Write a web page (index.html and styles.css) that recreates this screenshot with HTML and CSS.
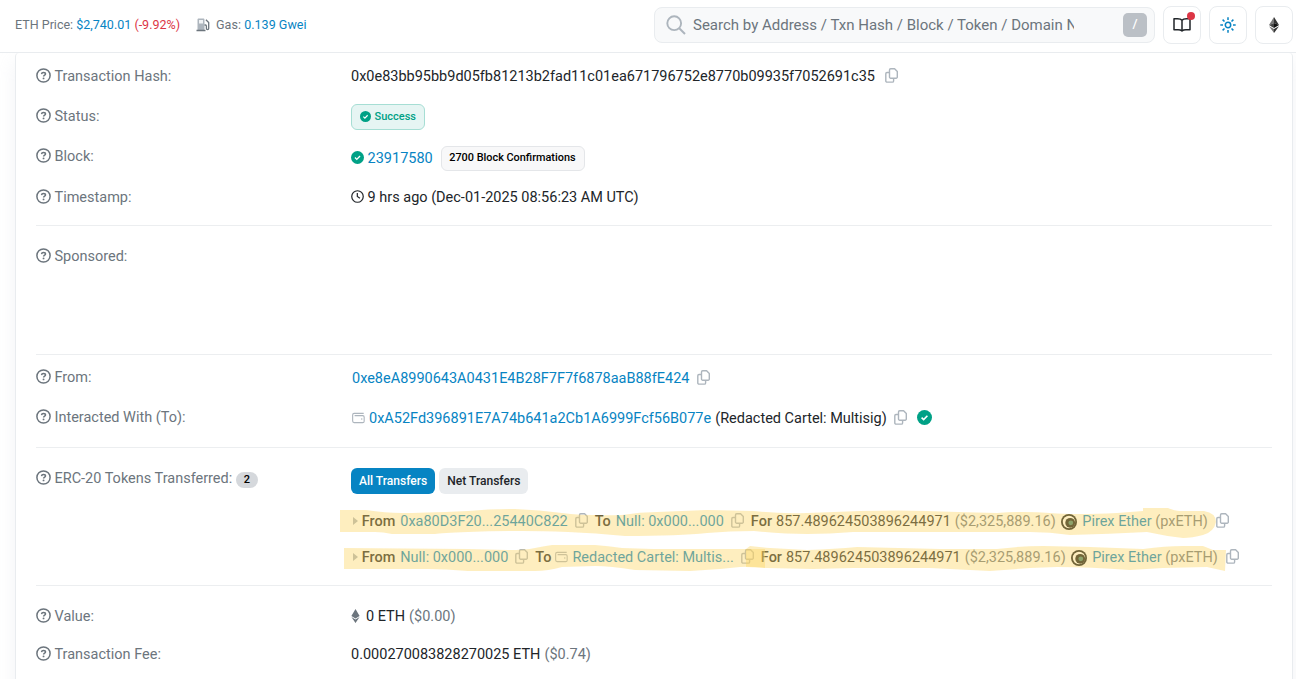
FILE: index.html
```html
<!DOCTYPE html>
<html lang="en">
<head>
<meta charset="utf-8">
<title>Transaction Details</title>
<link rel="stylesheet" href="styles.css">
</head>
<body>
<svg class="defs" aria-hidden="true">
  <symbol id="help" viewBox="0 0 15 15"><circle cx="7.500" cy="7.500" r="6.600" fill="none" stroke="currentColor" stroke-width="1.500"/><path d="M5.500 6.100c.1-1.100.8-1.700 2-1.700 1.100 0 2 .5 2 1.500 0 1.200-1.900 1.200-1.900 2.500" fill="none" stroke="currentColor" stroke-width="1.500"/><circle cx="7.550" cy="10.400" r=".95" fill="currentColor"/></symbol>
  <symbol id="copy" viewBox="0 0 13 15"><path d="M5.700.8h3.900l2.700 2.600v5.600a1.200 1.200 0 0 1-1.200 1.200H5.700a1.200 1.200 0 0 1-1.200-1.200V2A1.200 1.200 0 0 1 5.700.8zM4.500 4.500H2A1.200 1.200 0 0 0 .8 5.700v7.200A1.200 1.200 0 0 0 2 14.100h5.400a1.200 1.200 0 0 0 1.200-1.200v-2.600" fill="none" stroke="currentColor" stroke-width="1.400" stroke-linejoin="round"/></symbol>
  <symbol id="check" viewBox="0 0 16 16"><circle cx="8" cy="8" r="8" fill="#00a186"/><path d="M4.900 8.100l2.200 2.200 4-4.100" fill="none" stroke="#fff" stroke-width="1.700"/></symbol>
  <symbol id="wallet" viewBox="0 0 14 12"><path d="M12.600 1H2.300A1.700 1.700 0 0 0 .7 2.700v6.600A1.700 1.700 0 0 0 2.300 11h9.200a1.600 1.600 0 0 0 1.600-1.600V5a1.600 1.600 0 0 0-1.600-1.600H2.800" fill="none" stroke="currentColor" stroke-width="1.200"/><circle cx="10.500" cy="7.200" r=".8" fill="currentColor"/></symbol>
  <symbol id="token" viewBox="0 0 16 16"><circle cx="8" cy="8" r="8" fill="#10161a"/><circle cx="8" cy="8" r="6.200" fill="#fff"/><circle cx="9.200" cy="8.800" r="4.900" fill="#12181a"/><circle cx="9.800" cy="8.800" r="2.400" fill="#3f8070"/></symbol>
</svg>

<header class="topbar">
  <div class="stats">
    <span>ETH Price: <a>$2,740.01</a> <span class="down">(-9.92%)</span></span>
    <svg class="gas" viewBox="0 0 14 14"><path d="M1.500 12V1.800C1.500 1 2 .5 2.800.5h4.400c.8 0 1.300.5 1.300 1.300V12z" fill="#adb5bd"/><path d="M3 2h4v3.500H3z" fill="#f1f3f5"/><path d="M.5 12.500h9M8.500 7h1c.7 0 .9.500.9 1.200v2.200c0 1.500 2.300 1.500 2.300 0V4.600L9.900 1.800" fill="none" stroke="#6c757d" stroke-width="1.300"/></svg>
    <span class="gasprice">Gas: <a>0.139 Gwei</a></span>
  </div>
  <div class="tools">
    <div class="search">
      <svg viewBox="0 0 20 20"><circle cx="8.200" cy="8.200" r="6.900" fill="none" stroke="#adb5bd" stroke-width="1.900"/><path d="M13 13l6 6" stroke="#adb5bd" stroke-width="2"/></svg>
      <div class="placeholder">Search by Address / Txn Hash / Block / Token / Domain Name</div>
      <kbd>/</kbd>
    </div>
    <div class="tool"><svg class="book" viewBox="0 0 18 14"><path d="M9 2.300C8 1 6.500.8 4.500.8H1v11h4c2 0 3 .3 4 1.200 1-.9 2-1.200 4-1.200h4V.8h-3.500C11.500.8 10 1 9 2.300zV13" fill="none" stroke="#212529" stroke-width="1.500" stroke-linejoin="round"/></svg><i class="dot"></i></div>
    <div class="tool"><svg class="sun" viewBox="0 0 16 16"><g fill="none" stroke="#0784c3" stroke-width="1.500"><circle cx="8" cy="8" r="2.700"/><path d="M8 .3v2.700M8 13v2.700M.3 8H3M13 8h2.700M2.600 2.600l1.900 1.900M11.500 11.500l1.900 1.900M13.400 2.600l-1.900 1.900M4.500 11.500l-1.900 1.900"/></g></svg></div>
    <div class="tool"><svg class="eth" viewBox="0 0 10 16"><path d="M5 0L0 8.100 5 6z" fill="#777"/><path d="M5 0v6l5 2.100z" fill="#343434"/><path d="M0 8.100L5 6v5z" fill="#444"/><path d="M10 8.100L5 6v5z" fill="#111"/><path d="M0 9.200L5 16v-3.900z" fill="#777"/><path d="M10 9.200L5 16v-3.900z" fill="#343434"/></svg></div>
  </div>
</header>

<main class="card">
  <section class="group g1">
    <div class="row"><div class="label"><svg class="help"><use href="#help"/></svg>Transaction Hash:</div>
      <div class="value"><span class="txhash">0x0e83bb95bb9d05fb81213b2fad11c01ea671796752e8770b09935f7052691c35</span><svg class="copy c10"><use href="#copy"/></svg></div></div>
    <div class="row"><div class="label"><svg class="help"><use href="#help"/></svg>Status:</div>
      <div class="value"><span class="status"><svg viewBox="0 0 16 16"><use href="#check"/></svg>Success</span></div></div>
    <div class="row tall"><div class="label"><svg class="help"><use href="#help"/></svg>Block:</div>
      <div class="value low"><svg class="check"><use href="#check"/></svg><a>23917580</a><span class="confirm">2700 Block Confirmations</span></div></div>
    <div class="row"><div class="label"><svg class="help"><use href="#help"/></svg>Timestamp:</div>
      <div class="value"><svg class="clock" viewBox="0 0 14 14"><circle cx="7" cy="7" r="6.200" fill="none" stroke="currentColor" stroke-width="1.300"/><path d="M6.800 3.200V7l2.800 2" fill="none" stroke="currentColor" stroke-width="1.300"/></svg>9 hrs ago (Dec-01-2025 08:56:23 AM UTC)</div></div>
  </section>
  <section class="group g2">
    <div class="row"><div class="label"><svg class="help"><use href="#help"/></svg>Sponsored:</div></div>
  </section>
  <section class="group g3">
    <div class="row"><div class="label"><svg class="help"><use href="#help"/></svg>From:</div>
      <div class="value from"><a>0xe8eA8990643A0431E4B28F7F7f6878aaB88fE424</a><svg class="copy c8"><use href="#copy"/></svg></div></div>
    <div class="row"><div class="label"><svg class="help"><use href="#help"/></svg>Interacted With (To):</div>
      <div class="value from"><svg class="wallet"><use href="#wallet"/></svg><a>0xA52Fd396891E7A74b641a2Cb1A6999Fcf56B077e</a><span class="sp">(Redacted Cartel: Multisig)</span><svg class="copy c7"><use href="#copy"/></svg><svg class="check big"><use href="#check"/></svg></div></div>
  </section>
  <section class="group g4">
    <div class="row"><div class="label"><svg class="help"><use href="#help"/></svg>ERC-20 Tokens Transferred:<b class="count">2</b></div>
      <div class="value tabs"><span class="tab on">All Transfers</span><span class="tab">Net Transfers</span></div></div>
    <div class="transfers">
      <div class="transfer"><i class="caret"></i><b>From</b><a>0xa80D3F20...25440C822</a><svg class="copy c7"><use href="#copy"/></svg><b class="to">To</b><a>Null: 0x000...000</a><svg class="copy c7"><use href="#copy"/></svg><b class="for">For</b><span class="sp">857.489624503896244971</span><span class="muted sp">($2,325,889.16)</span><svg class="token"><use href="#token"/></svg><a>Pirex Ether <span class="muted">(pxETH)</span></a><svg class="copy c8"><use href="#copy"/></svg></div>
      <div class="transfer"><i class="caret"></i><b>From</b><a>Null: 0x000...000</a><svg class="copy c7"><use href="#copy"/></svg><b class="to">To</b><svg class="wallet w2"><use href="#wallet"/></svg><a class="nosp">Redacted Cartel: Multis...</a><svg class="copy c7"><use href="#copy"/></svg><b class="for">For</b><span class="sp">857.489624503896244971</span><span class="muted sp">($2,325,889.16)</span><svg class="token"><use href="#token"/></svg><a>Pirex Ether <span class="muted">(pxETH)</span></a><svg class="copy c8"><use href="#copy"/></svg></div>
      <svg class="marker" viewBox="336 503 900 72">
        <path d="M340 510H366Q385 513 402 513T468 511Q490 509 515 509Q540 510 562 513T622 515Q640 512 657 512L707 510L754 511V531Q730 531 707 533Q680 536 625 536Q595 533 568 532T522 531Q495 531 468 532T435 534H392Q383 532 375 532H340z"/>
        <path d="M754 511Q780 514 807 513T860 511Q900 510 927 511T997 513Q1025 511 1050 513T1117 513L1143 511V508H1168Q1175 511 1180 511H1204Q1216 513 1216 522Q1214 532 1203 535T1183 538Q1165 536 1147 532Q1110 534 1070 535Q1050 532 1030 532H853Q830 534 807 534T754 531z"/>
        <path d="M344 548L468 549L508 550Q525 550 535 548T552 545H595Q608 546 622 548L653 549L723 549H765V568Q750 566 740 567T720 569L690 571L635 570Q610 566 595 566L562 567Q548 571 535 571H468Q445 569 428 569H344z"/>
        <path d="M746 549L750 546Q760 547 770 548L807 550Q835 549 857 547L940 549L997 549Q1020 546 1043 546L1090 547L1143 549Q1165 546 1183 546H1203L1213 550H1226L1225 571L1207 567L1163 568L1130 570Q1090 567 1057 567L1030 568L990 571L930 568H853L813 569L767 568L746 567z"/>
      </svg>
    </div>
  </section>
  <section class="group g5">
    <div class="row short"><div class="label"><svg class="help"><use href="#help"/></svg>Value:</div>
      <div class="value"><svg class="ethsm" viewBox="0 0 10 16"><path d="M5 0L.3 8 5 10.800 9.700 8zM.3 9.200L5 16l4.700-6.800L5 12z" fill="#6c757d"/></svg>0 ETH<span class="muted sp">($0.00)</span></div></div>
    <div class="row short"><div class="label"><svg class="help"><use href="#help"/></svg>Transaction Fee:</div>
      <div class="value">0.000270083828270025 ETH<span class="muted sp">($0.74)</span></div></div>
  </section>
</main>
</body>
</html>
```
FILE: styles.css
```css
* { box-sizing: border-box; }
body { margin: 0; height: 679px; overflow: hidden; background: #fff; color: #212529; font: 14.49px/20px Roboto, sans-serif; }
svg { display: block; flex: none; }
.defs { display: none; }
a { color: #0784c3; }
b { font-weight: 500; }
.muted { color: #6c757d; }
.topbar { position: relative; z-index: 2; height: 53px; padding: 0 3px 3px 15px; border-bottom: 1px solid #e9ecef; background: #fff; display: flex; align-items: center; justify-content: space-between; }
.stats { display: flex; align-items: center; color: #6c757d; font-size: 12.53px; }
.gasprice { letter-spacing: .03px; }
.down { color: #dc3545; }
.gas { width: 14px; height: 14px; margin: 0 6px 0 16px; }
.tools { display: flex; align-items: center; gap: 8px; }
.search { width: 501px; height: 36px; border: 1px solid #e9ecef; border-radius: 8px; background: #f8f9fa; display: flex; align-items: center; padding: 0 7px 0 10.500px; color: #6c757d; font-size: 15px; }
.search svg { width: 20px; height: 20px; margin-right: 7.500px; }
.placeholder { width: 381px; overflow: hidden; white-space: nowrap; }
kbd { margin-left: auto; width: 24px; height: 24px; border-radius: 5px; background: #bbc0c6; color: #fff; font: 500 13px/21px Roboto, sans-serif; text-align: center; }
.tool { position: relative; width: 38px; height: 38px; border: 1px solid #e9ecef; border-radius: 8px; display: flex; align-items: center; justify-content: center; }
.book { width: 18px; height: 14px; }
.sun { width: 16px; height: 16px; }
.eth { width: 10px; height: 16px; }
.dot { position: absolute; top: 5px; right: 5px; width: 8px; height: 8px; border-radius: 50%; background: #dc3545; }
.card { margin: 0 3px 0 15px; height: 640px; padding: 3px 20px 0; border: solid #e9ecef; border-width: 0 1px; border-radius: 4px 4px 0 0; background: #fff; box-shadow: 0 8px 19px rgba(189, 197, 209, .2); }
.group { border-bottom: 1px solid #eceef0; }
.g1 { height: 170px; }
.g2 { height: 129px; padding-top: 10px; }
.g3 { height: 93px; padding-top: 2px; }
.g4 { height: 138px; padding-top: 10px; }
.g5 { padding-top: 11px; border: 0; }
.row { display: grid; grid-template-columns: 315px 1fr; height: 40px; align-items: center; }
.row.tall { height: 41px; padding-bottom: 1px; }
.row.short { height: 38px; }
.label, .value { display: flex; align-items: center; padding-top: 2px; color: #6c757d; white-space: nowrap; }
.value { color: #212529; }
.help { width: 15px; height: 15px; margin: 0 3.500px 3px 0; }
.copy { width: 13px; height: 15px; margin-bottom: 3px; color: #adb5bd; }
.c10 { margin-left: 10px; }
.c7 { margin-left: 7px; }
.c8 { margin-left: 8px; }
.sp { margin-left: 4px; }
.status { height: 26px; margin-bottom: 1px; border: 1px solid #a6ded4; border-radius: 6px; background: #e6f5f3; color: #00a186; display: flex; align-items: center; font-size: 11px; font-weight: 500; padding: 0 8px; }
.status svg { width: 11px; height: 11px; margin-right: 3.500px; }
.check { width: 13px; height: 13px; margin: 0 3.600px 3px 0; }
.value.low { padding-top: 6px; }
.confirm { height: 25px; margin: 0 0 2px 8px; padding: 0 8px 0 7.500px; border: 1px solid #e4e6e9; border-radius: 6px; background: #f8f8f9; color: #000; font: 500 10.880px/22px Roboto, sans-serif; }
.clock { width: 13px; height: 13px; margin: 0 3.600px 3px 0; }
.value.from { padding: 4px 0 0 1px; }
.wallet { width: 13px; height: 12px; margin: 0 4px 2px 0; color: #adb5bd; }
.big { width: 15px; height: 15px; margin: 0 0 3px 10px; }
.count { height: 16px; margin: 2px 0 0 4px; padding: 0 7.600px; border-radius: 8px; background: #d5d8dc; color: #000; font-size: 11px; line-height: 15px; }
.value.tabs { gap: 4px; padding-top: 6px; }
.tab { height: 26px; padding: 0 8px; border-radius: 6px; background: #e9ecef; font-size: 12.060px; line-height: 26px; font-weight: 500; }
.tab.on { background: #0784c3; color: #fff; }
.transfers { position: relative; margin-left: 315px; padding-top: 5px; }
.transfer { height: 36px; padding-top: 2px; display: flex; align-items: center; white-space: nowrap; }
.caret { margin: 0 4px 2px 1.700px; border: solid transparent; border-width: 4px 0 4px 5px; border-left-color: #adb5bd; }
.transfer a { margin-left: 5px; }
.transfer a.nosp { margin-left: 0; }
.to { margin-left: 7px; }
.for { margin-left: 7px; }
.transfer .w2 { margin: 0 4px 2px; }
.token { width: 16px; height: 16px; margin: 0 .5px 0 5px; }
.marker { position: absolute; left: -15px; top: 5px; width: 900px; height: 72px; fill: rgba(253, 213, 99, .41); }
.ethsm { width: 9px; height: 14px; margin: 0 6px 2px 0; }
```
